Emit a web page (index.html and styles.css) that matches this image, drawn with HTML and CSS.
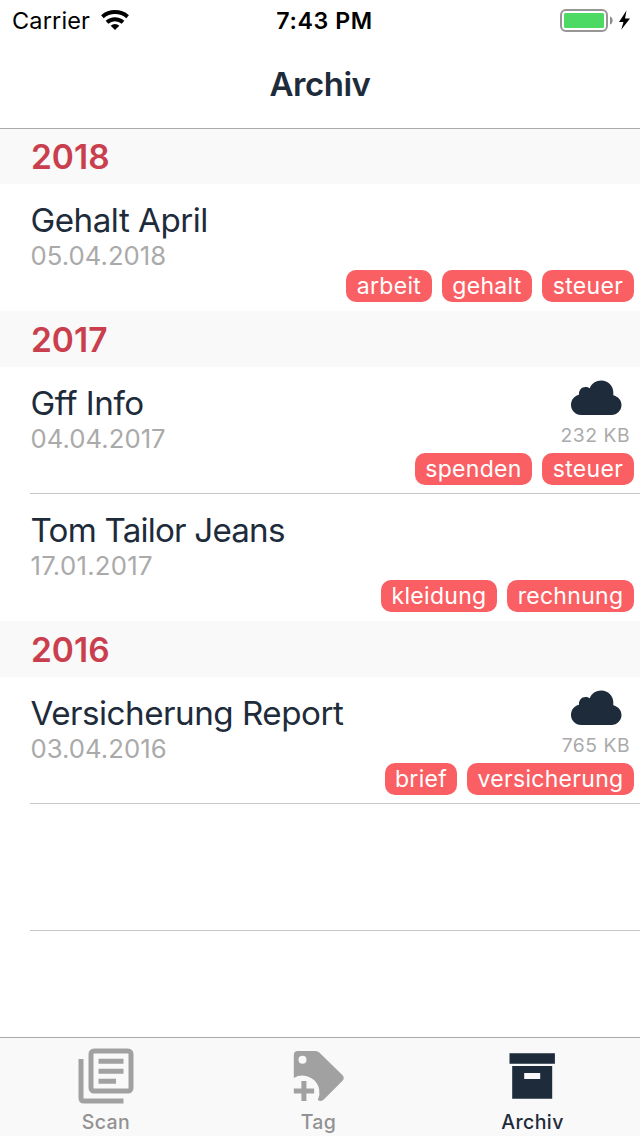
FILE: index.html
```html
<!DOCTYPE html>
<html lang="de">
<head>
<meta charset="utf-8">
<title>Archiv</title>
<link rel="stylesheet" href="styles.css">
</head>
<body>
<svg class="defs" width="0" height="0">
  <symbol id="cloud" viewBox="0 0 51 36">
    <path d="M10 35C4.500 35 0 30.500 0 25c0-5 3-9 8-10.200C7.500 10.500 10.500 7 14.500 7c1.700 0 3 .4 4.300 1.300C20.500 3.500 25 .5 30.300.5 37 .5 42.300 5.700 42.300 12.300v2.900C47 16.500 50.500 20 50.500 25c0 5.500-4.500 10-10 10z"/>
  </symbol>
</svg>
<header class="status">
  <div class="status-left">
    <span class="carrier">Carrier</span>
    <svg class="wifi" viewBox="0 0 28 20" width="28" height="20">
      <g fill="none" stroke="#000" stroke-width="4">
        <path d="M1.400 6.700a19.500 19.500 0 0 1 25.200 0"/>
        <path d="M6 12.300a12 12 0 0 1 16 0"/>
      </g>
      <path d="M14 20l-4.300-4.300a6.200 6.200 0 0 1 8.600 0z"/>
    </svg>
  </div>
  <span class="time">7:43 PM</span>
  <svg class="battery" viewBox="0 0 72 24" width="72" height="24">
    <rect x="1" y="2" width="46" height="21" rx="5" fill="#fff" stroke="#969696" stroke-width="2"/>
    <rect x="4" y="5" width="40" height="15" rx="1.500" fill="#4cd964"/>
    <path d="M50 8.500c3.500 1 3.500 7 0 8z" fill="#8c8c8c"/>
    <path d="M66.500 2.500L59 14h4.500l-2.300 7.800L70 10.500h-5z"/>
  </svg>
</header>
<nav class="navbar"><h1 class="nav-title">Archiv</h1></nav>
<main class="list">
  <h2 class="year">2018</h2>
  <article class="row">
    <div class="info"><div class="title t-gehalt">Gehalt April</div><div class="date">05.04.2018</div></div>
    <div class="tags"><span class="tag w-arbeit">arbeit</span><span class="tag w-gehalt">gehalt</span><span class="tag w-steuer">steuer</span></div>
  </article>
  <h2 class="year">2017</h2>
  <article class="row lined">
    <div class="info"><div class="title t-gff">Gff Info</div><div class="date">04.04.2017</div></div>
    <div class="remote"><svg class="cloud"><use href="#cloud"/></svg><span class="size">232 KB</span></div>
    <div class="tags"><span class="tag w-spenden">spenden</span><span class="tag w-steuer">steuer</span></div>
  </article>
  <article class="row">
    <div class="info"><div class="title t-tom">Tom Tailor Jeans</div><div class="date d-tom">17.01.2017</div></div>
    <div class="tags"><span class="tag w-kleidung">kleidung</span><span class="tag w-rechnung">rechnung</span></div>
  </article>
  <h2 class="year">2016</h2>
  <article class="row lined">
    <div class="info"><div class="title t-report">Versicherung Report</div><div class="date">03.04.2016</div></div>
    <div class="remote"><svg class="cloud"><use href="#cloud"/></svg><span class="size">765 KB</span></div>
    <div class="tags"><span class="tag w-brief">brief</span><span class="tag w-versicherung">versicherung</span></div>
  </article>
  <div class="row lined"></div>
</main>
<footer class="tabs">
  <div class="tab">
    <svg viewBox="0 0 56 56" width="56" height="56">
      <g fill="none" stroke="#a1a1a1" stroke-width="5">
        <path d="M3 11v39q0 3 3 3h39.500"/>
        <rect x="13" y="3" width="40" height="40" rx="3"/>
        <path d="M20.500 13.200h25M20.500 23.200h25M20.500 33.200h17.500"/>
      </g>
    </svg>
    <span class="label">Scan</span>
  </div>
  <div class="tab">
    <svg viewBox="0.7 0 56 56" width="56" height="56">
      <path fill="#a1a1a1" fill-rule="evenodd" d="M7.500 3h18q2 0 3.500 1.500L52 27q3 3 0 6L33.500 51.500q-2.500 2.500-6 .5A17 17 0 0 0 3.500 30V7q0-4 4-4zM12.200 7.800a4 4 0 1 0 0 8 4 4 0 0 0 0-8z"/>
      <path d="M3.500 43h20.300M13.600 33v20" stroke="#a1a1a1" stroke-width="5"/>
    </svg>
    <span class="label">Tag</span>
  </div>
  <div class="tab active">
    <svg viewBox="0.8 0 56 56" width="56" height="56">
      <path fill-rule="evenodd" d="M5.300 5.300h45.400v10.400H5.300zM8 18h40v32.700H8zM20 25v6h16v-6z"/>
    </svg>
    <span class="label">Archiv</span>
  </div>
</footer>
</body>
</html>
```
FILE: styles.css
```css
* { box-sizing: border-box; }
body {
  margin: 0;
  width: 640px;
  height: 1136px;
  display: flex;
  flex-direction: column;
  background: #fff;
  color: #1e2b3a;
  font-family: Inter, "Liberation Sans", sans-serif;
  overflow: hidden;
}
.defs { position: absolute; }
.status {
  height: 40px;
  display: grid;
  grid-template-columns: 1fr auto 1fr;
  align-items: center;
  padding: 0 8px 0 12px;
  color: #000;
  line-height: 42px;
}
.status-left { display: flex; align-items: center; gap: 11px; }
.wifi { margin-bottom: 2px; }
.carrier { font-size: 23.5px; letter-spacing: 0.15px; }
.time { font-size: 23.2px; font-weight: 600; letter-spacing: 0.6px; padding-left: 5px; }
.battery { justify-self: end; margin-bottom: 2px; }
.navbar {
  height: 89px;
  border-bottom: 1px solid #a9a9ab;
  text-align: center;
}
.nav-title { margin: 0; font-size: 33px; line-height: 88px; font-weight: 600; letter-spacing: -0.5px; }
.list { flex: 1; }
.year {
  margin: 0;
  height: 56px;
  padding-left: 31px;
  background: #f9f9f9;
  color: #c93f4e;
  font-size: 33.5px;
  font-weight: 600;
  line-height: 59px;
}
.year:first-child { height: 55px; line-height: 57px; }
.row {
  height: 127px;
  margin-left: 30px;
  padding-right: 6px;
  display: grid;
  grid-template-columns: 1fr auto;
  grid-template-rows: 86px 32px;
}
.lined { border-bottom: 1px solid #c8c7cc; }
.info { padding: 16px 0 0 0.5px; white-space: nowrap; }
.title { font-size: 33.2px; line-height: 40px; margin-bottom: 1px; letter-spacing: -0.5px; }
.t-tom { letter-spacing: -0.8px; }
.date { font-size: 25.7px; line-height: 30px; color: #aaa; letter-spacing: 0.03px; }
.d-tom { letter-spacing: 0.3px; }
.remote { display: flex; flex-direction: column; align-items: flex-end; padding: 13px 4px 0 0; }
.cloud { width: 51px; height: 36px; margin: 0 8px 8px 0; fill: #1e2b3a; }
.size { font-size: 19.3px; line-height: 22px; color: #aaa; letter-spacing: 0.5px; }
.tags { grid-column: 1 / -1; grid-row: 2; display: flex; justify-content: flex-end; gap: 10px; }
.tag {
  height: 32px;
  border-radius: 10px;
  background: #fa5f64;
  color: #fff;
  font-size: 23px;
  line-height: 33px;
  text-align: center;
  letter-spacing: 0.3px;
}
.w-arbeit { width: 86px; }
.w-gehalt { width: 90px; }
.w-steuer { width: 92px; }
.w-spenden { width: 117px; }
.w-kleidung { width: 116px; }
.w-rechnung { width: 127px; }
.w-brief { width: 72px; }
.w-versicherung { width: 167px; }
.tabs {
  height: 99px;
  border-top: 1px solid #a9a9ab;
  background: #f9f9f9;
  display: grid;
  grid-template-columns: 212px 213px 215px;
  color: #929292;
}
.tab { display: flex; flex-direction: column; align-items: center; padding-top: 10px; }
.active { color: #1e2b3a; fill: #1e2b3a; }
.label { font-size: 19.5px; font-weight: 500; line-height: 24px; margin-top: 6px; letter-spacing: 0.4px; }
```
